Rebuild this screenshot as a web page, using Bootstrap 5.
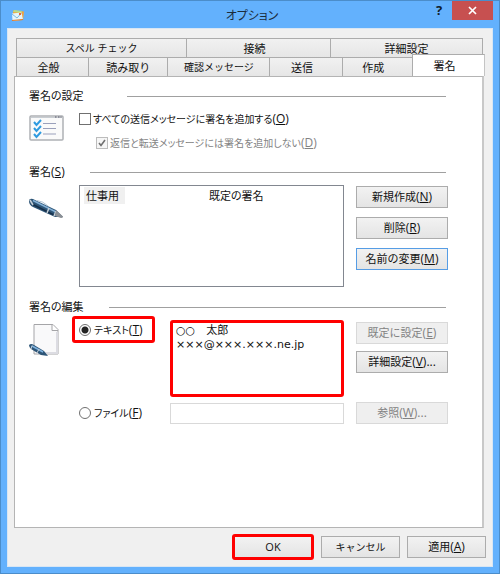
<!DOCTYPE html>
<html lang="ja">
<head>
<meta charset="utf-8">
<meta name="viewport" content="width=device-width, initial-scale=1">
<title>オプション</title>
<link href="https://cdn.jsdelivr.net/npm/bootstrap@5.3.0/dist/css/bootstrap.min.css" rel="stylesheet">
<style>
  body { font-family: "Open Sans", "Noto Sans CJK JP", sans-serif; font-size: 11px; line-height: 16px; color: #111; font-feature-settings: "palt"; }
  .win { background: #63b1fd; border: 1px solid #4b8dca; padding: 0 6px 6px; }
  .titlebar { height: 27px; }
  .titlebar h1 { font-size: 12px; line-height: 30px; color: #1c2c3c; }
  .side { flex: 1 1 0; }
  .help-btn { font-size: 13px; line-height: 18px; width: 26px; color: #10202c; }
  .close-btn { width: 41px; height: 19px; background: #c75050; }
  .client { background: #f0f0f0; border: 1px solid #d8e6f4; padding-top: 9px; }
  .tabs { padding: 0 9px 0 8px; }
  .tab { height: 19px; border: 1px solid #acacac; border-bottom: 0; border-right: 0; background: linear-gradient(#f1f1f1, #e6e6e6); line-height: 17px; color: #111; font-size: 11px; }
  .tab-last { border-right: 1px solid #acacac; }
  .lower { margin-right: -2px; }
  .tab.current { height: 22px; margin: -3px 0 -1px; background: #fff; z-index: 1; line-height: 19px; border-right: 1px solid #c4c4c4; }
  .w70 { flex: 70 1 0; } .w72 { flex: 72 1 0; } .w79 { flex: 79 1 0; } .w102 { flex: 102 1 0; }
  .w144 { flex: 144 1 0; } .w152 { flex: 152 1 0; } .w170 { flex: 170 1 0; }
  .panel { background: #fff; border: 1px solid #b4b4b4; border-right: 2px solid #c8c8c8; margin: 0 8px 0 6px; padding: 11px 34px 0 14px; }
  .sec { font-size: 11px; line-height: 16px; }
  .kana.kana { font-size: 10px; }
  .key { font-size: 12px; }
  .sec-rule { height: 1px; background: #a0a0a0; margin-right: 2px; }
  .label-a { width: 98px; } .label-b { width: 61px; } .label-c { width: 80px; }
  .icon-col { width: 50px; }
  .icon-narrow { width: 43px; }
  .tick { appearance: none; width: 12px; height: 12px; border: 1px solid #707070; background: #fff; margin: 0 2px 0 0; }
  .tick:disabled { border-color: #bcbcbc; background: #f6f6f6 url("data:image/svg+xml,%3Csvg xmlns='http://www.w3.org/2000/svg' viewBox='0 0 10 10'%3E%3Cpath d='M2 5l2 2.500L8 2' fill='none' stroke='%23707070' stroke-width='1.600'/%3E%3C/svg%3E"); }
  .dot { appearance: none; width: 12px; height: 12px; border: 1px solid #707070; border-radius: 50%; background: #fff; margin: 0 3px 0 0; }
  .dot:checked { background: radial-gradient(circle, #222 0 3px, #fff 4px); }
  .muted { color: #838383; padding-left: 17px; }
  .listing { border: 1px solid #828790; height: 102px; padding: 1px 4px; }
  .listing td { padding: 0 2px; line-height: 17px; height: 17px; }
  .name-cell { width: 123px; }
  .picked { background: #f0f0f0; padding: 0 6px 0 2px; margin-left: -2px; display: inline-block; }
  .side-btns { width: 92px; }
  .face { height: 22px; border: 1px solid #acacac; background: linear-gradient(#f2f2f2, #e4e4e4); font-size: 11px; line-height: 18px; padding: 0; color: #111; border-radius: 0; }
  .face.focused { border-color: #569de5; }
  .face:disabled { border-color: #d9d9d9; background: #efefef; color: #838383; opacity: 1; }
  .gap9 { gap: 9px; } .gap7 { gap: 7px; }
  .foot-btn { width: 79px; }
  .ringed { border: 3px solid #f00; border-radius: 3px; }
  .ok-btn { width: 82px; height: 26px; }
  .radio-box { width: 83px; height: 27px; padding-left: 4px; }
  .radio-cell { width: 98px; }
  .radio-plain { padding-left: 7px; }
  .memo { height: 77px; padding: 1px 3px; line-height: 14px; font-family: "DejaVu Sans", "Noto Sans CJK JP", sans-serif; font-size: 11px; resize: none; color: #111; outline: 0; overflow: hidden; font-feature-settings: normal; }
  .path-box { height: 21px; border: 1px solid #d9d9d9; background: #fff; }
  .memo-row { margin-top: 4px; }
  .edit-btns { padding-top: 6px; }
  .edit-row { margin-top: 1px; }
  .list-btns { padding-top: 1px; }
  .gap-list { margin-top: 5px; } .gap-checks { margin-top: 7px; }
  .sec-2 { margin-top: 13px; } .sec-3 { margin-top: 12px; }
  .foot { padding: 6px 6px 6px; }
</style>
</head>
<body>
<main class="win min-vh-100 d-flex flex-column">
  <header class="titlebar d-flex">
    <div class="side ps-1">
      <svg width="14" height="14" viewBox="0 0 14 14" class="mt-2 ms-n1 d-block" aria-hidden="true">
        <path d="M2 1.500L13 2.500 12 11 2 12z" fill="#f3a33c"/><path d="M3 1L11 2 10 4 2 3z" fill="#b7dc8a"/>
        <path d="M1 4.500L10.500 3.500 12 10.500 1.500 12z" fill="#e6f5fb"/><path d="M1 5l5 4 4.500-5" fill="none" stroke="#7dbbe0"/><path d="M1 11.500l11-1" stroke="#de7c2d" stroke-width="1.200"/><rect x="8" y="4" width="2" height="2" fill="#e8633d"/>
      </svg>
    </div>
    <h1 class="m-0 fw-normal">オプション</h1>
    <div class="side d-flex justify-content-end align-items-start">
      <button type="button" class="help-btn border-0 bg-transparent p-0 fw-bold" aria-label="ヘルプ">?</button>
      <button type="button" class="close-btn border-0 p-0 d-flex align-items-center justify-content-center" aria-label="閉じる">
        <svg width="9" height="9" viewBox="0 0 9 9"><path d="M1 1l7 7M8 1L1 8" stroke="#fff" stroke-width="1.700"/></svg>
      </button>
    </div>
  </header>

  <div class="client flex-grow-1 d-flex flex-column">
    <div class="tabs" role="tablist">
      <div class="d-flex">
        <button class="tab kana w170 p-0" role="tab" type="button">スペル チェック</button>
        <button class="tab w144 p-0" role="tab" type="button"><span class="me-2">接続</span></button>
        <button class="tab tab-last w152 p-0" role="tab" type="button">詳細設定</button>
      </div>
      <div class="d-flex lower">
        <button class="tab w72 p-0" role="tab" type="button"><span class="me-2">全般</span></button>
        <button class="tab w79 p-0" role="tab" type="button">読み取り</button>
        <button class="tab kana w102 p-0" role="tab" type="button">確認メッセージ</button>
        <button class="tab w72 p-0" role="tab" type="button"><span class="me-2">送信</span></button>
        <button class="tab w70 p-0" role="tab" type="button"><span class="me-2">作成</span></button>
        <button class="tab current w72 p-0" role="tab" type="button" aria-selected="true"><span class="me-2">署名</span></button>
      </div>
    </div>

    <section class="panel flex-grow-1">
      <div class="d-flex align-items-center"><h2 class="sec label-a m-0 fw-normal">署名の設定</h2><div class="sec-rule flex-grow-1"></div></div>
      <div class="d-flex gap-checks">
        <div class="icon-col pt-1">
          <svg width="35" height="26" viewBox="0 0 35 26" class="d-block" aria-hidden="true">
            <rect x="1" y="1" width="33" height="24" rx="1" fill="#fafafa" stroke="#aeb1b5" stroke-width="1.500"/>
            <path d="M2 2.500h31" stroke="#c8cdd2"/><path d="M26 2h1.500M29 2h1.500M31.500 2h1" stroke="#556" stroke-width="1.200"/>
            <path d="M5 7l2.500 3L12 5M5 13l2.500 3L12 11M5 19l2.500 3L12 17" fill="none" stroke="#2f9be0" stroke-width="2"/>
            <path d="M14 8.500h13M14 13.500h13M14 19h13" stroke="#9aa0bb"/>
          </svg>
        </div>
        <div class="d-flex flex-column gap-2">
          <label class="d-flex align-items-center kana"><input type="checkbox" class="tick"><span>すべての送信メッセージに署名を追加する<span class="key">(<u>O</u>)</span></span></label>
          <label class="d-flex align-items-center kana muted"><input type="checkbox" class="tick" checked disabled><span>返信と転送メッセージには署名を追加しない<span class="key">(<u>D</u>)</span></span></label>
        </div>
      </div>

      <div class="d-flex align-items-center sec-2"><h2 class="sec label-b m-0 fw-normal">署名<span class="key">(<u>S</u>)</span></h2><div class="sec-rule flex-grow-1"></div></div>
      <div class="d-flex gap-list">
        <div class="icon-col pt-2">
          <svg width="36" height="26" viewBox="0 0 36 26" class="d-block mt-1" aria-hidden="true">
            <path d="M0 4Q0 1 4 2L27 13 34 20 26 20 4 10Q0 8 0 4z" fill="#2d5577"/>
            <path d="M4 3.500L27 15" stroke="#83b0d6" stroke-width="1.500"/><path d="M3 7l22 11" stroke="#17304a" stroke-width="1.500"/>
            <path d="M1 3l3 5M20 11l-2 5M27 14l-2 5" stroke="#c5ced6" stroke-width="1.500"/>
            <path d="M27 13l7 6.500q0 1.500-2 1.500l-6-2z" fill="#8a8f95"/><path d="M8 3.500Q14 4 19 9" fill="none" stroke="#b5c7d6"/>
          </svg>
        </div>
        <div class="listing flex-grow-1">
          <table class="w-100">
            <tbody><tr><td class="name-cell"><span class="picked">仕事用</span></td><td>既定の署名</td></tr></tbody>
          </table>
        </div>
        <div class="d-flex flex-column gap9 ms-2 ps-1 list-btns">
          <button type="button" class="btn face side-btns">新規作成<span class="key">(<u>N</u>)</span></button>
          <button type="button" class="btn face side-btns">削除<span class="key">(<u>R</u>)</span></button>
          <button type="button" class="btn face side-btns focused">名前の変更<span class="key">(<u>M</u>)</span></button>
        </div>
      </div>

      <div class="d-flex align-items-center sec-3"><h2 class="sec label-c m-0 fw-normal">署名の編集</h2><div class="sec-rule flex-grow-1"></div></div>
      <div class="d-flex edit-row">
        <div class="icon-narrow pt-2">
          <svg width="32" height="34" viewBox="1 1 32 34" class="d-block" aria-hidden="true">
            <path d="M6 1.500H25L30 6.500V31H6z" fill="#f9f9fa" stroke="#a5a5a8"/><path d="M24 1.500v6h6" fill="#fff" stroke="#a5a5a8"/><path d="M29 9v21H9" fill="none" stroke="#dcdce2" stroke-width="2"/>
            <path d="M1 22q2-2 5 0l10 6 4 5-7-1L3 26q-2-2-2-4z" fill="#2d5577"/><path d="M4 23l11 6" stroke="#7fb2de" stroke-width="1.500"/><path d="M4 22.500l-1 3.500M11 26l-2 4" stroke="#c5ced6"/>
          </svg>
        </div>
        <div class="radio-cell">
          <label class="radio-box ringed kana d-flex align-items-center"><input type="radio" name="src" class="dot" checked><span>テキスト<span class="key">(<u>T</u>)</span></span></label>
        </div>
        <div class="flex-grow-1 memo-row"><textarea class="memo ringed w-100 d-block" aria-label="署名テキスト">○○　太郎
×××@×××.×××.ne.jp</textarea></div>
        <div class="d-flex flex-column gap7 ms-2 ps-1 edit-btns">
          <button type="button" class="btn face side-btns" disabled>既定に設定<span class="key">(<u>E</u>)</span></button>
          <button type="button" class="btn face side-btns">詳細設定<span class="key">(<u>V</u>)...</span></button>
        </div>
      </div>
      <div class="d-flex align-items-center gap-list">
        <div class="icon-narrow"></div>
        <div class="radio-cell radio-plain"><label class="d-flex align-items-center kana"><input type="radio" name="src" class="dot"><span>ファイル<span class="key">(<u>F</u>)</span></span></label></div>
        <div class="flex-grow-1"><input type="text" class="path-box w-100 d-block" disabled aria-label="ファイルのパス"></div>
        <div class="ms-2 ps-1"><button type="button" class="btn face side-btns d-block" disabled>参照<span class="key">(<u>W</u>)...</span></button></div>
      </div>
    </section>

    <footer class="foot d-flex justify-content-end align-items-center gap7">
      <button type="button" class="btn face ringed ok-btn">OK</button>
      <button type="button" class="btn face kana foot-btn">キャンセル</button>
      <button type="button" class="btn face foot-btn">適用<span class="key">(<u>A</u>)</span></button>
    </footer>
  </div>
</main>
<script src="https://cdn.jsdelivr.net/npm/bootstrap@5.3.0/dist/js/bootstrap.bundle.min.js"></script>
</body>
</html>
